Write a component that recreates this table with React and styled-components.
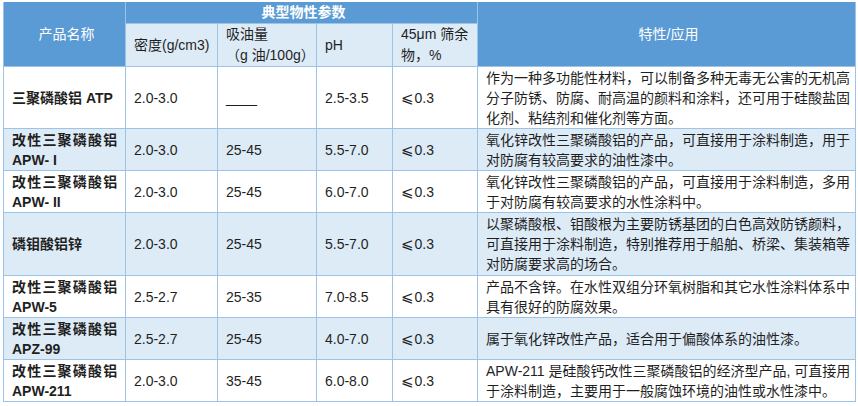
import React from "react";
import styled, { createGlobalStyle } from "styled-components";

const Global = createGlobalStyle`
  html, body { margin: 0; padding: 0; background: #ffffff; }
  body { font-family: "Liberation Sans", "Noto Sans CJK SC", sans-serif; }
`;

const Page = styled.div`
  padding: 2px 3px 0 3px;
`;

const Table = styled.table`
  width: 852px;
  table-layout: fixed;
  border-collapse: collapse;
  font-family: "Liberation Sans", "Noto Sans CJK SC", sans-serif;
  font-size: 14px;
  line-height: 20px;
  color: #1f1f1f;
`;

const Col = styled.col`
  width: ${(p) => p.$w}px;
`;

const Row = styled.tr`
  height: ${(p) => p.$h}px;
  background: ${(p) => (p.$alt ? "#ddebf7" : "#ffffff")};
`;

const HeadCell = styled.th`
  border: 1px solid #9dc3e6;
  border-top: none;
  padding: 0 4px 0 8px;
  vertical-align: middle;
  white-space: nowrap;
  line-height: 21px;
  font-weight: ${(p) => (p.$bold ? 700 : 400)};
  text-align: ${(p) => (p.$left ? "left" : "center")};
  background: ${(p) => (p.$light ? "#ddebf7" : "#5b9bd5")};
  color: ${(p) => (p.$light ? "#1f1f1f" : "#ffffff")};
  font-family: "Liberation Sans", "Noto Sans CJK SC", sans-serif;
`;

const Cell = styled.td`
  border: 1px solid #9dc3e6;
  padding: 0 4px 0 8px;
  vertical-align: middle;
  text-align: left;
  font-weight: ${(p) => (p.$name ? 700 : 400)};
  white-space: nowrap;
  overflow: hidden;
`;

const Spread = styled.span`
  letter-spacing: 1.2px;
`;

const Leq = styled.span`
  font-family: "DejaVu Sans", "Liberation Sans", sans-serif;
  font-size: 15px;
  margin-right: 1px;
`;

const rows = [
  {
    h: 62,
    name: <>三聚磷酸铝 ATP</>,
    d: "2.0-3.0",
    oil: "____",
    ph: "2.5-3.5",
    desc: [
      "作为一种多功能性材料，可以制备多种无毒无公害的无机高",
      "分子防锈、防腐、耐高温的颜料和涂料，还可用于硅酸盐固",
      "化剂、粘结剂和催化剂等方面。",
    ],
  },
  {
    h: 42,
    alt: true,
    name: (
      <>
        <Spread>改性三聚磷酸铝</Spread>
        <br />
        APW- I
      </>
    ),
    d: "2.0-3.0",
    oil: "25-45",
    ph: "5.5-7.0",
    desc: [
      "氧化锌改性三聚磷酸铝的产品，可直接用于涂料制造，用于",
      "对防腐有较高要求的油性漆中。",
    ],
  },
  {
    h: 42,
    name: (
      <>
        <Spread>改性三聚磷酸铝</Spread>
        <br />
        APW- II
      </>
    ),
    d: "2.0-3.0",
    oil: "25-45",
    ph: "6.0-7.0",
    desc: [
      "氧化锌改性三聚磷酸铝的产品，可直接用于涂料制造，多用",
      "于对防腐有较高要求的水性涂料中。",
    ],
  },
  {
    h: 63,
    alt: true,
    name: <>磷钼酸铝锌</>,
    d: "2.0-3.0",
    oil: "25-45",
    ph: "5.5-7.0",
    desc: [
      "以聚磷酸根、钼酸根为主要防锈基团的白色高效防锈颜料，",
      "可直接用于涂料制造，特别推荐用于船舶、桥梁、集装箱等",
      "对防腐要求高的场合。",
    ],
  },
  {
    h: 42,
    name: (
      <>
        <Spread>改性三聚磷酸铝</Spread>
        <br />
        APW-5
      </>
    ),
    d: "2.5-2.7",
    oil: "25-35",
    ph: "7.0-8.5",
    desc: [
      "产品不含锌。在水性双组分环氧树脂和其它水性涂料体系中",
      "具有很好的防腐效果。",
    ],
  },
  {
    h: 42,
    alt: true,
    name: (
      <>
        <Spread>改性三聚磷酸铝</Spread>
        <br />
        APZ-99
      </>
    ),
    d: "2.5-2.7",
    oil: "25-45",
    ph: "4.0-7.0",
    desc: ["属于氧化锌改性产品，适合用于偏酸体系的油性漆。"],
  },
  {
    h: 42,
    name: (
      <>
        <Spread>改性三聚磷酸铝</Spread>
        <br />
        APW-211
      </>
    ),
    d: "2.0-3.0",
    oil: "35-45",
    ph: "6.0-8.0",
    desc: [
      "APW-211 是硅酸钙改性三聚磷酸铝的经济型产品, 可直接用",
      "于涂料制造，主要用于一般腐蚀环境的油性或水性漆中。",
    ],
  },
];

export default function App() {
  return (
    <Page>
      <Global />
      <Table>
        <colgroup>
          <Col $w={122} />
          <Col $w={92} />
          <Col $w={99} />
          <Col $w={76} />
          <Col $w={85} />
          <Col $w={378} />
        </colgroup>
        <thead>
          <Row $h={21}>
            <HeadCell rowSpan={2}>产品名称</HeadCell>
            <HeadCell colSpan={4} $bold>
              典型物性参数
            </HeadCell>
            <HeadCell rowSpan={2}>特性/应用</HeadCell>
          </Row>
          <Row $h={43}>
            <HeadCell $light $left>
              密度(g/cm3)
            </HeadCell>
            <HeadCell $light $left>
              吸油量
              <br />
              （g 油/100g）
            </HeadCell>
            <HeadCell $light $left>
              pH
            </HeadCell>
            <HeadCell $light $left>
              45μm 筛余
              <br />
              物，%
            </HeadCell>
          </Row>
        </thead>
        <tbody>
          {rows.map((r, i) => (
            <Row key={i} $h={r.h} $alt={r.alt}>
              <Cell $name>{r.name}</Cell>
              <Cell>{r.d}</Cell>
              <Cell>{r.oil}</Cell>
              <Cell>{r.ph}</Cell>
              <Cell>
                <Leq>⩽</Leq>0.3
              </Cell>
              <Cell>
                {r.desc.map((line, j) => (
                  <React.Fragment key={j}>
                    {j > 0 && <br />}
                    {line}
                  </React.Fragment>
                ))}
              </Cell>
            </Row>
          ))}
        </tbody>
      </Table>
    </Page>
  );
}
